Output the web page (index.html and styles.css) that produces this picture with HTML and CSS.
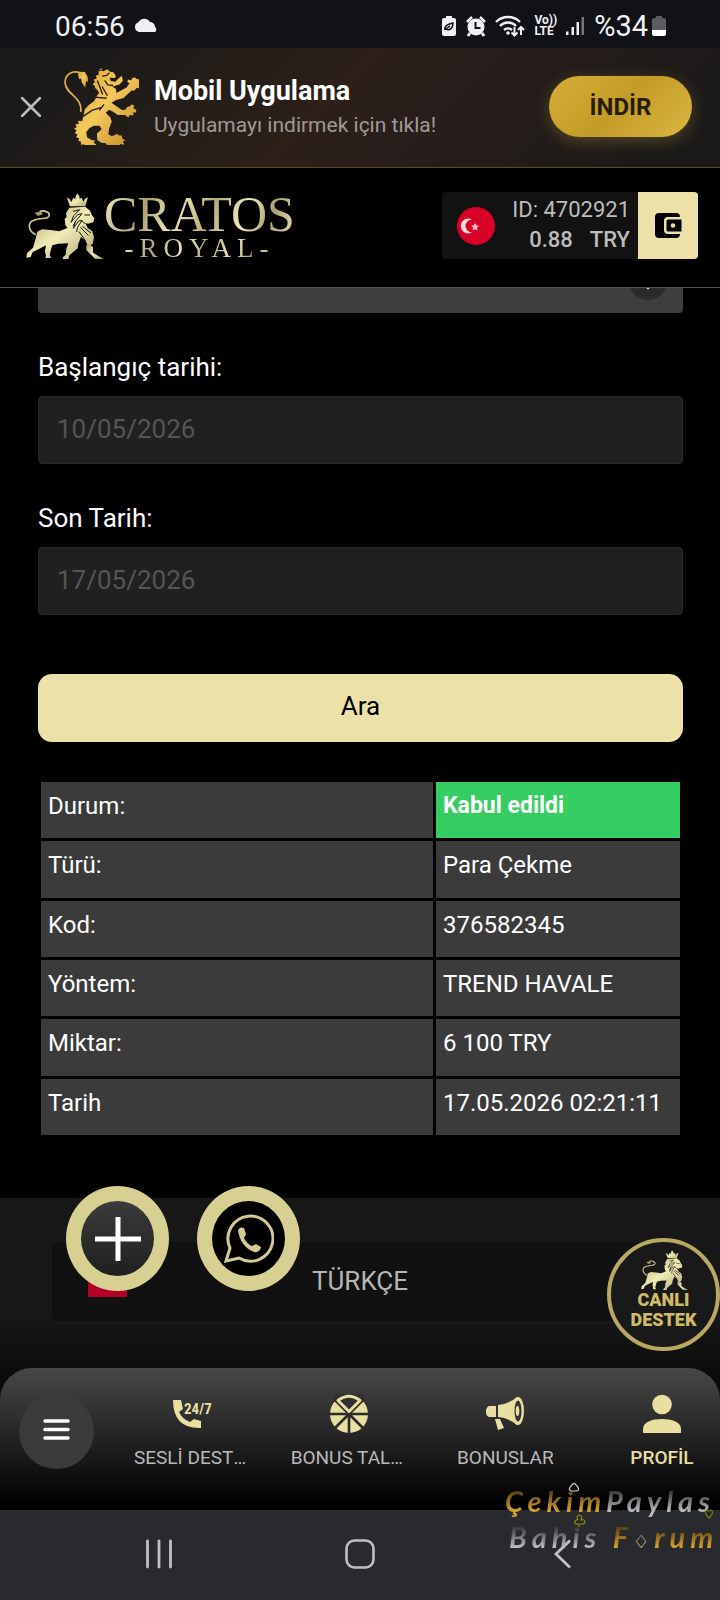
FILE: index.html
```html
<!DOCTYPE html>
<html lang="tr">
<head>
    <meta charset="UTF-8">
    <meta name="viewport" content="width=device-width, initial-scale=1.0">
    <title>Cratos Royal</title>
    <link rel="stylesheet" href="styles.css">
</head>
<body>
    <svg class="defs" aria-hidden="true">
        <defs>
            <linearGradient id="gold" x1="0" y1="0" x2="1" y2="1">
                <stop offset="0" stop-color="#d9a030"/><stop offset=".45" stop-color="#f3c95c"/><stop offset="1" stop-color="#bf8424"/>
            </linearGradient>
            <linearGradient id="pale" x1="0" y1="0" x2="1" y2="1">
                <stop offset="0" stop-color="#a79e6c"/><stop offset=".5" stop-color="#f1ebb8"/><stop offset="1" stop-color="#b3aa75"/>
            </linearGradient>
            <symbol id="lion" viewBox="76 82 238 198">
                <g fill="url(#pale)">
                    <path d="M203 95l9 5 5 9 6-13 6 4 1-9 5-8 6 8 1 9 6-4 5 13 4-9 10-5-8 27h-46z"/>
                    <path d="M211 126l48-3 14 12 6 14 7 9-3 12-16 4-8-2 7 15 14 10 5 18-4 19-13 10-8-18-14-12-8 20-2 14-16 13-10 9-2 13-18 0 2-8 8-8 2-18 6-16-30 1-18 5-4 12-4 16 4 10-17 0 2-5 -3-17 3-16-20 10-20 10-6 15-13 2 2-14 18-16 6-20 4-16 3-12 14-7 26 2 26 4 24-10-6-10-2-18 6-4-2-12z"/>
                    <path d="M262 238l10-3 10 10 0 16 16 10 16 9-26-1-26-26z"/>
                </g>
                <path d="M110 207C88 196 84 172 104 164C125 154 150 164 151 147C149 137 133 134 122 137" fill="none" stroke="#cfc794" stroke-width="5"/>
                <path d="M126 137l-19 4 10 10 14-5z" fill="#a79e6c"/>
                <path d="M222 137l20-5-18 18-8 20 20-23 13-3-20 24-6 20 16-22 10-2-14 22-2 13M244 185l24 24M240 198l20 28M256 148h17M258 174l-9-8M231 165l-9 16M250 182l26 20" fill="none" stroke="#17150b" stroke-width="3"/>
            </symbol>
            <symbol id="moon-star" viewBox="0 0 38 38">
                <path d="M17 12.500a7.500 7.500 0 1 0 0 13a6 6 0 1 1 0-13z" fill="#fff" opacity=".85"/>
                <path d="M20 16l1.300 2.200 2.600.6-1.800 1.900.3 2.700-2.400-1.200-2.400 1.200.4-2.700-1.700-1.900 2.500-.6z" fill="#f8b8c4"/>
            </symbol>
        </defs>
    </svg>

    <div class="app">
        <div class="status-bar">
            <div class="status-left">
                <span>06:56</span>
                <svg width="24" height="16" viewBox="0 0 24 16" fill="#f0f0f4"><path d="M5 14a5 5 0 0 1-1-9.500A7 7 0 0 1 16 4a5 5 0 0 1 5 5a3 3 0 0 1 0 5z"/></svg>
            </div>
            <div class="status-right">
                <svg width="16" height="22" viewBox="0 0 16 22"><path d="M5 1h6v2h2a2 2 0 0 1 2 2v14a2 2 0 0 1-2 2H3a2 2 0 0 1-2-2V5a2 2 0 0 1 2-2h2z" fill="#f0f0f4"/><path d="M4 15c-1-4 3-6 8-7c0 5-3 8-7 6l4-3" fill="none" stroke="#111217" stroke-width="1.500"/></svg>
                <svg width="20" height="22" viewBox="0 0 20 22"><circle cx="10" cy="12" r="8.500" fill="#f0f0f4"/><path d="M4 18l-2 3M16 18l2 3" stroke="#f0f0f4" stroke-width="3"/><path d="M1 7l5-5M19 7l-5-5" stroke="#f0f0f4" stroke-width="2.500"/><path d="M9.500 7v6h5" fill="none" stroke="#111217" stroke-width="2"/></svg>
                <svg width="30" height="24" viewBox="0 0 30 24" fill="none" stroke="#f0f0f4"><path d="M1 8a17 17 0 0 1 24 0M5 12a11 11 0 0 1 16 0M9 16a6 6 0 0 1 8 0" stroke-width="2.400"/><circle cx="13" cy="19" r="1.800" fill="#f0f0f4" stroke="none"/><path d="M19.500 13v8M16.500 18.500l3 3 3-3M26 21v-8M23 16l3-3 3 3" stroke-width="2"/></svg>
                <span class="volte"><span>Vo))</span><span>LTE</span></span>
                <svg width="19" height="20" viewBox="0 0 19 20" fill="#f0f0f4"><path d="M0 15.500h2.500V19H0zM5.500 11H8v8H5.500zM10.500 6H13v13h-2.500z"/><path d="M15.500 1H18v18h-2.500z" opacity=".45"/></svg>
                <span class="charge"><span>%34</span>
                <svg width="14" height="20" viewBox="0 0 14 20"><path d="M4 0h6v2h2a2 2 0 0 1 2 2v10H0V4a2 2 0 0 1 2-2h2z" fill="#5c5d61"/><path d="M0 14h14v4a2 2 0 0 1-2 2H2a2 2 0 0 1-2-2z" fill="#fff"/></svg></span>
            </div>
        </div>

        <div class="app-banner">
            <button class="close-btn" aria-label="Kapat"><svg width="20" height="20" viewBox="0 0 20 20"><path d="M1 1l18 18M19 1L1 19" stroke="#bfbdba" stroke-width="2.500" stroke-linecap="round"/></svg></button>
            <svg class="banner-lion" width="76" height="77" viewBox="190 207 226 229" fill="url(#gold)">
                <path d="M243 338C248 290 200 290 196 250C196 226 218 212 242 222" fill="none" stroke="#e0ae48" stroke-width="5"/>
                <path d="M235 218l20 1 9 16 0 14-5-3-3 20-10-16-2-12-6 2-3-12z"/>
                <path d="M298 211l12 6 12-6 8 7 10 2 7 10-2 7-16-1 3 10 14 2 8-9 11-9 3 15-9 10-22 8 10 6 2 12 30-16 9-13-7-3 3-8 9 3 3-7 8-2 5 5 10 1 1 9 5 8-8 1 1 10-9-3-6 8-9 0-24 22-22 6-14 8 30 21 10 1 8-10 8-1 4-6 8 4-3 8 9 4-1 9-7-2-1 10-10-1-5 7-9-7-22 0-14-10-12-6-10 9 14 14 4 12-8 22-2 16 10 6 16-7 6 5 8 0 1 8 10 7-8 2 4 10-11-2-4 7-8-4-14 7-5-8-8 3-6-8-12-1-12-8-1-19 14-13-6-10-17 0-14 7-9 12 3 16 15 8 8 0-3 7 8 7-8 2 1 9-9-5-6 6-4-8-8 4-4-10-9 1 1-9-8-2 2-8-9-3 4-8-8-5 5-7-7-7 8-3-4-9 10-1-2-9 12 1 8-35 12-13 16-12 14-26-8-10-8-2 5-6-8-6 7-6-4-8 9-2-2-10 8-2 0-12 10 1-2-12 10 1z"/>
                <path d="M306 231l14-2 8-8M314 244l9 13 16 2M276 293l44 4M250 351l26-18 28-9M278 258l18 26M292 244l16 42M306 262l16 27M312 315l-14 18" fill="none" stroke="#2b2015" stroke-width="4"/>
            </svg>
            <div class="banner-text">
                <strong>Mobil Uygulama</strong>
                <span>Uygulamayı indirmek için tıkla!</span>
            </div>
            <button class="download-btn">İNDİR</button>
        </div>

        <header class="site-header">
            <a class="logo" href="#" aria-label="Cratos Royal">
                <svg width="80" height="66"><use href="#lion"/></svg>
                <span class="logo-text">
                    <span class="logo-name">CRATOS</span>
                    <span class="logo-sub">-ROYAL-</span>
                </span>
            </a>
            <div class="account">
                <svg class="flag" width="38" height="38" viewBox="0 0 38 38"><circle cx="19" cy="19" r="19" fill="#d80027"/><use href="#moon-star" x="-2" width="38" height="38"/></svg>
                <div class="account-info">
                    <span>ID: 4702921</span>
                    <span class="balance"><span>0.88</span><span>TRY</span></span>
                </div>
                <button class="wallet-btn" aria-label="Cüzdan">
                    <svg width="27" height="26" viewBox="0 0 27 26"><path d="M4 0h17q4 0 4 4H13q-4 0-4 4v9q0 4 4 4h12q0 4-4 4H4q-4 0-4-4V4q0-4 4-4z"/><path d="M13 6.500h13.500v12H13q-1.500 0-1.500-1.500V8q0-1.500 1.500-1.500z"/><circle cx="18" cy="12.500" r="2.200" fill="#ece2a9"/></svg>
                </button>
            </div>
        </header>

        <main class="content">
            <form class="filter" onsubmit="return false">
                <div class="select-wrap">
                    <select aria-label="Tür"><option></option></select>
                    <svg width="38" height="38" viewBox="0 0 38 38"><circle cx="19" cy="19" r="19" fill="#2b2b2b"/><path d="M13 20l6 6 6-6" fill="none" stroke="#fff" stroke-width="2"/></svg>
                </div>
                <div class="field">
                    <label for="start">Başlangıç tarihi:</label>
                    <input type="text" id="start" value="10/05/2026">
                </div>
                <div class="field">
                    <label for="end">Son Tarih:</label>
                    <input type="text" id="end" value="17/05/2026">
                </div>
                <button class="search-btn">Ara</button>
            </form>

            <div class="results">
                <table>
                    <tr><th>Durum:</th><td class="accepted">Kabul edildi</td></tr>
                    <tr><th>Türü:</th><td>Para Çekme</td></tr>
                    <tr><th>Kod:</th><td>376582345</td></tr>
                    <tr><th>Yöntem:</th><td>TREND HAVALE</td></tr>
                    <tr><th>Miktar:</th><td>6 100 TRY</td></tr>
                    <tr><th>Tarih</th><td>17.05.2026 02:21:11</td></tr>
                </table>
            </div>

            <footer class="site-footer">
                <button class="lang-btn">
                    <svg width="39" height="28" viewBox="0 0 39 28"><path d="M0 0h39v28H0z" fill="#b30028"/><use href="#moon-star" y="-9" width="38" height="38"/></svg>
                    TÜRKÇE
                </button>
            </footer>

            <!-- floating buttons -->
            <div class="floating">
                <button class="round-btn plus" aria-label="Aç"><svg width="46" height="46" viewBox="0 0 46 46"><path d="M23 1v44M0 23h46" stroke="#fff" stroke-width="5"/></svg></button>
                <button class="round-btn whatsapp" aria-label="WhatsApp">
                    <svg width="50" height="50" viewBox="0 0 50 50"><path d="M2 47l4-13A22.500 22.500 0 1 1 15 44z" fill="none" stroke="#d2ca92" stroke-width="3"/><path d="M14 17q1-5 6-3l2 6-2 4q3 6 8 8l4-2 5 3q-1 6-7 5Q17 33 14 17z" fill="#d2ca92"/></svg>
                </button>
            </div>
            <button class="live-btn">
                <svg width="48" height="40"><use href="#lion"/></svg>
                <span>CANLI</span>
                <span>DESTEK</span>
            </button>
        </main>

        <nav class="bottom-nav">
            <button class="menu-btn" aria-label="Menü"><svg width="27" height="21" viewBox="0 0 27 21"><path d="M2 2h23M2 10.500h23M2 19h23" stroke="#fff" stroke-width="3.500" stroke-linecap="round"/></svg></button>
            <div class="nav-items">
                <a href="#">
                    <svg width="40" height="40" viewBox="0 0 40 40"><path d="M1 6h8l2 9-4 3q3 7 11 10l4-3 7 2v7Q1 35 1 6z" fill="#e8dfa0"/><text x="12" y="20" class="icon-text">24/7</text></svg>
                    <span>SESLİ DESTEK</span>
                </a>
                <a href="#">
                    <svg width="40" height="40" viewBox="0 0 40 40"><circle cx="20" cy="20" r="19" fill="#e8dfa0"/><path d="M20 0v40M0 20h40M5 5l30 30M35 5L5 35" stroke="#2b2b2b" stroke-width="2.600"/><path d="M20 20L3 3Q20-10 37 3z" fill="#303030"/><path d="M9 6.500Q20-2 31 6.500L20 17.500z" fill="#303030" stroke="#e8dfa0" stroke-width="3" stroke-linejoin="round"/></svg>
                    <span>BONUS TALEP</span>
                </a>
                <a href="#">
                    <svg width="40" height="40" viewBox="0 0 40 40" fill="#e8dfa0"><path d="M4 12h7v11H4q-3-1-3-5.500T4 12zM10 25h5l4 9-6 2zM13 11Q24 10 32 3v28q-8-7-19-8z"/><ellipse cx="33" cy="17" rx="6" ry="14"/><ellipse cx="33" cy="17" rx="3.500" ry="10.500" fill="#333"/><ellipse cx="32.500" cy="17" rx="1.800" ry="5"/></svg>
                    <span>BONUSLAR</span>
                </a>
                <a href="#" class="active">
                    <svg width="40" height="40" viewBox="0 0 40 40" fill="#e8dfa0"><circle cx="20" cy="10.500" r="9.800"/><path d="M1 39V35C1 28 10 25 20 25s19 3 19 10v4z"/></svg>
                    <span>PROFİL</span>
                </a>
            </div>
        </nav>

        <div class="system-nav">
            <button aria-label="Son uygulamalar"><svg width="30" height="30" viewBox="0 0 30 30"><path d="M3.500 2v26M15 2v26M26.500 2v26" stroke="#bfc0c4" stroke-width="2.800" stroke-linecap="round"/></svg></button>
            <button aria-label="Ana ekran"><svg width="30" height="30" viewBox="0 0 30 30"><rect x="1.500" y="1.500" width="27" height="27" rx="8" fill="none" stroke="#bfc0c4" stroke-width="2.600"/></svg></button>
            <button aria-label="Geri"><svg width="30" height="30" viewBox="0 0 30 30"><path d="M24 1.500L10 15l14 13.500" fill="none" stroke="#bfc0c4" stroke-width="2.800"/></svg></button>
            <div class="watermark">
                <p><span class="w-gold">Çekim</span><span class="w-silver">Paylas</span></p>
                <p><span class="w-silver">Bahis</span> <span class="w-gold">F<i>♢</i>rum</span></p>
                <svg width="215" height="70" viewBox="0 0 215 70" fill="none" stroke-width="1.200"><path d="M69 0q-8 7-2 8h4q6-1-2-8z" stroke="#ccc"/><path d="M74 44v-3q-5 1-4-3 2-2 3-1-2-4 1-5 4 1 2 5 4-1 4 2-1 3-5 2" stroke="#8b8b10"/><path d="M204 35q-6-6-2-8l2 1 2-1q4 2-2 8z" stroke="#77770c"/></svg>
            </div>
        </div>
    </div>
</body>
</html>
```
FILE: styles.css
```css
* { margin: 0; padding: 0; box-sizing: border-box; }
body { font-family: Roboto, "Liberation Sans", sans-serif; background: #000; color: #fff; }
button { border: none; background: none; font-family: inherit; cursor: pointer; }
a { text-decoration: none; color: inherit; }
svg { display: block; flex-shrink: 0; }
.defs { position: absolute; width: 0; height: 0; }
.app { height: 100vh; display: flex; flex-direction: column; background: #0c0c0c; overflow: hidden; }

/* status bar */
.status-bar { height: 48px; flex-shrink: 0; display: flex; justify-content: space-between; align-items: center; padding: 4px 54px 0 55px; background: #111217; color: #f0f0f4; font-size: 28px; }
.status-left, .status-right { display: flex; align-items: center; gap: 9px; }
.charge { display: flex; align-items: center; gap: 4px; font-size: 29px; }
.volte { display: flex; flex-direction: column; font-size: 12px; line-height: 11px; font-weight: 700; }

/* app banner */
.app-banner { height: 120px; flex-shrink: 0; display: flex; align-items: center; padding: 0 28px 2px 21px; background: linear-gradient(135deg, #1b1a19 10%, #2c2018 45%, #2a1e1b 55%, #1b1a19 90%); border-bottom: 1px solid #5a4c24; }
.close-btn { padding: 0; margin-right: 22px; }
.banner-text { flex: 1; display: flex; flex-direction: column; margin-left: 15px; gap: 4px; }
.banner-text strong { font-size: 27px; line-height: 32px; }
.banner-text span { font-size: 21px; line-height: 28px; color: #a09a95; }
.download-btn { width: 143px; height: 61px; border-radius: 31px; background: linear-gradient(135deg, #d4ae37, #c39c28 50%, #dcb743); box-shadow: 0 4px 16px rgba(212, 175, 55, 0.3); color: #291d08; font-size: 24px; font-weight: 700; }

/* header */
.site-header { height: 120px; flex-shrink: 0; display: flex; justify-content: space-between; align-items: center; padding: 0 22px 4px 24px; background: #000; border-bottom: 1px solid #555; }
.logo { display: flex; align-items: center; }
.logo-text { display: flex; flex-direction: column; align-items: center; font-family: "Liberation Serif", serif; }
.logo-text span { background: linear-gradient(110deg, #f0eac0, #aaa170 22%, #efe8b6 38%, #b3aa75 55%, #f0eabc 72%, #aaa170 85%, #e9e2b0); -webkit-background-clip: text; background-clip: text; color: transparent; }
.logo-name { font-size: 50px; line-height: 44px; }
.logo-sub { font-size: 27px; line-height: 24px; letter-spacing: 6px; }
.account { display: flex; align-items: center; height: 67px; background: #121212; border-radius: 4px; overflow: hidden; padding-left: 15px; }
.account-info { display: flex; flex-direction: column; align-items: flex-end; padding: 0 8px 2px 17px; font-size: 22px; line-height: 30px; color: #bdbdbd; }
.balance { display: flex; gap: 17px; font-weight: 500; }
.wallet-btn { width: 60px; height: 67px; display: flex; align-items: center; justify-content: center; background: #ece2a9; }

/* content */
.content { flex: 1; min-height: 0; position: relative; overflow: hidden; background: #000; display: flex; flex-direction: column; }
.filter { margin-top: -43px; padding: 0 37px 0 38px; display: flex; flex-direction: column; }
.select-wrap { position: relative; }
.select-wrap select { display: block; width: 100%; height: 68px; background: #3d3d3d; border: none; border-radius: 4px; appearance: none; }
.select-wrap svg { position: absolute; right: 16px; top: 17px; pointer-events: none; }
.field { margin-top: 38px; display: flex; flex-direction: column; gap: 13px; }
.field label { font-size: 26px; line-height: 32px; }
.field input { width: 100%; height: 68px; padding: 0 18px 3px; background: #202020; border: 1px solid #292929; border-radius: 4px; font-family: inherit; font-size: 26px; color: #555; }
.search-btn { margin-top: 59px; height: 68px; padding-bottom: 4px; border-radius: 14px; background: #ece2a9; font-size: 26px; color: #000; }
.results { padding: 37px 37px 60px 38px; }
.results table { width: 100%; height: 359px; border-spacing: 3px; font-size: 24px; line-height: 32px; }
.results th, .results td { padding: 8px 7px; text-align: left; vertical-align: top; font-weight: 400; background: #3b3b3b; }
.results td { width: 244px; white-space: nowrap; }
.results .accepted { background: #35cc62; font-size: 23px; font-weight: 700; }
.site-footer { flex: 1; padding: 43px 51px 0; background: linear-gradient(#171717 70%, #0d0d0d); }
.lang-btn { position: relative; width: 100%; height: 82px; padding-bottom: 2px; background: #111; border: 1px solid #1a1a1a; border-radius: 6px; font-size: 26px; color: #b5b5b5; }
.lang-btn svg { position: absolute; left: 36px; top: 27px; }

/* floating buttons */
.floating { position: absolute; left: 66px; bottom: 77px; display: flex; gap: 28px; }
.round-btn { width: 103px; height: 105px; border: 15px solid #d8d092; border-radius: 50%; display: flex; align-items: center; justify-content: center; background: #000; }
.plus { background: linear-gradient(#3b3b3b, #1f1f1f); }
.live-btn { position: absolute; right: 0; bottom: 17px; width: 113px; height: 113px; border: 4px solid #b8a862; border-radius: 50%; background: #191919; display: flex; flex-direction: column; align-items: center; padding-top: 8px; color: #cfbb68; font-size: 18px; line-height: 20px; font-weight: 900; }

/* bottom nav */
.bottom-nav { height: 142px; flex-shrink: 0; display: flex; align-items: flex-start; padding: 26px 0 0 19px; background: linear-gradient(#484848, #000 96%); border-radius: 32px 32px 0 0; }
.menu-btn { width: 75px; height: 75px; padding-bottom: 4px; border-radius: 50%; background: #3b3b3b; display: flex; align-items: center; justify-content: center; }
.nav-items { flex: 1; display: flex; justify-content: space-between; padding-left: 40px; }
.nav-items a { width: 116px; display: flex; flex-direction: column; align-items: center; gap: 12px; font-size: 19px; line-height: 24px; color: #b9b9b9; }
.nav-items span { max-width: 100%; overflow: hidden; text-overflow: ellipsis; white-space: nowrap; }
.nav-items .active { color: #e8dfa0; font-weight: 500; }
.icon-text { font-family: "Roboto Condensed", Roboto, sans-serif; font-size: 15px; font-weight: 700; fill: #e8dfa0; }

/* system nav */
.system-nav { height: 90px; flex-shrink: 0; position: relative; display: flex; justify-content: center; align-items: center; gap: 153px; padding-bottom: 3px; background: #292a2e; }
.system-nav button { width: 48px; height: 48px; display: flex; align-items: center; justify-content: center; }
.watermark { position: absolute; right: 0; top: -27px; width: 215px; font-family: Lato, sans-serif; font-style: italic; font-weight: 700; font-size: 29px; line-height: 36px; letter-spacing: 5px; white-space: nowrap; pointer-events: none; }
.watermark p + p { padding-left: 4px; }
.watermark svg { position: absolute; left: 0; top: 0; }
.w-gold { background: linear-gradient(#5a420f 25%, #d9a02c 80%); -webkit-background-clip: text; background-clip: text; color: transparent; }
.w-silver { background: linear-gradient(#3c3c40 25%, #b9b9bf 80%); -webkit-background-clip: text; background-clip: text; color: transparent; }
.watermark i { font-family: "DejaVu Sans", sans-serif; font-style: normal; font-weight: 400; font-size: 18px; color: #ccc; }
```
